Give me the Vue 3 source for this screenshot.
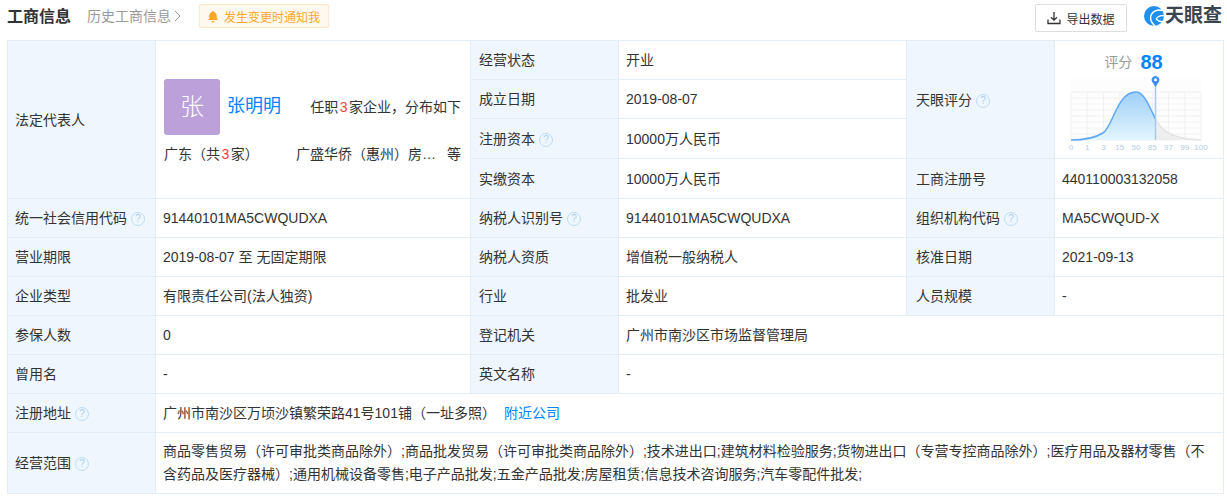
<script setup>
const axis = ['0', '1', '3', '15', '50', '85', '97', '99', '100']
const gridX = [0, 16.25, 32.5, 48.75, 65, 81.25, 97.5, 113.75, 130]
const gridY = [0, 6, 12, 18, 24, 30, 36, 42, 48]
const curveLeft = 'M0 48C14 48 24 46 32 41C42 34.5 46 0 65 0C73 0 78 14 84.5 27'
const curveRight = 'M84.5 27C90 37 98 47 130 48'
</script>

<template>
  <div class="page">
    <header class="bar">
      <h2 class="title">工商信息</h2>
      <a class="history">历史工商信息
        <svg width="7" height="12" viewBox="0 0 7 12"><path d="M1 1l5 5-5 5" fill="none" stroke="#999" stroke-width="1"/></svg>
      </a>
      <div class="notify">
        <svg width="12" height="13" viewBox="0 0 12 13"><path d="M6 1c.5 0 1 .4 1 .9C8.800 2.400 9.800 4 9.800 6v2.600L11 10H1l1.200-1.400V6C2.200 4 3.200 2.400 5 1.900 5 1.400 5.500 1 6 1zM4.500 11h3a1.500 1.500 0 0 1-3 0z" fill="#ffa726"/></svg>
        <span>发生变更时通知我</span>
      </div>
      <button class="export">
        <svg width="14" height="14" viewBox="0 0 14 14"><path d="M7 1v8M4 6.200 7 9.200l3-3M1 8.500V12.500H13V8.500" fill="none" stroke="#333" stroke-width="1.300"/></svg>
        <span>导出数据</span>
      </button>
      <div class="logo">
        <svg width="20" height="20" viewBox="0 0 20 20">
          <circle cx="10" cy="10" r="10" fill="#1f8ff0"/>
          <path d="M19.500 4.500C13 2.500 7.300 6 6.600 11c-.3 3.200 1.400 6.500 4.400 9" fill="none" stroke="#fff" stroke-width="1.500"/>
          <path d="M20 9.800c-3.500-.8-6.200.6-7.800 3.200 2 2.200 4.800 3 7.800 2.200" fill="none" stroke="#fff" stroke-width="1.200"/>
        </svg>
        <span>天眼查</span>
      </div>
    </header>

    <table class="info">
      <colgroup>
        <col class="c1" /><col class="c2" /><col class="c3" /><col class="c4" /><col class="c5" /><col class="c6" />
      </colgroup>
      <tbody>
        <tr>
          <th rowspan="4" class="first">法定代表人</th>
          <td rowspan="4" class="legal">
            <div class="person">
              <div class="avatar">张</div>
              <a class="name">张明明</a>
              <span class="office">任职<em>3</em>家企业，分布如下</span>
            </div>
            <div class="region">
              <span>广东（共<em>3</em>家）</span>
              <span class="firm"><span>广盛华侨（惠州）房…</span><span>等</span></span>
            </div>
          </td>
          <th>经营状态</th>
          <td>开业</td>
          <th rowspan="3" class="fifth">天眼评分<i class="help">?</i></th>
          <td rowspan="3" class="score">
            <div class="score-head"><span>评分</span><strong>88</strong></div>
            <svg class="chart" width="146" height="76" viewBox="-5 -16 146 76">
              <defs>
                <linearGradient id="fill" x1="0" y1="0" x2="0" y2="1">
                  <stop offset="0" stop-color="#9fcff8" />
                  <stop offset="1" stop-color="#e2f6fd" />
                </linearGradient>
              </defs>
              <rect x="0" y="-14" width="130" height="62" fill="#fdfdfd" />
              <path v-for="x in gridX" :key="'x' + x" :d="`M${x} 0V48`" stroke="#f1f1f3" fill="none" />
              <path v-for="y in gridY" :key="'y' + y" :d="`M0 ${y}H130`" stroke="#f1f1f3" fill="none" />
              <path :d="curveRight + 'H84.5Z'" fill="#eeeeee" />
              <path :d="curveLeft + 'V48H0Z'" fill="url(#fill)" />
              <path :d="curveRight" fill="none" stroke="#e4e4e6" stroke-width="1.5" />
              <path :d="curveLeft" fill="none" stroke="#5da6f6" stroke-width="1.5" />
              <path d="M84.5 -8V48" stroke="#a5c8f8" stroke-width="1.5" />
              <path d="M84.5 -5l-3.200-5a3.800 3.800 0 1 1 6.400 0z" fill="#3f8cf5" />
              <circle cx="84.5" cy="-12.200" r="1.500" fill="#ffffff" />
              <text v-for="(t, i) in axis" :key="t" :x="gridX[i]" y="57.500" class="tick">{{ t }}</text>
            </svg>
          </td>
        </tr>
        <tr><th>成立日期</th><td>2019-08-07</td></tr>
        <tr class="mid"><th>注册资本<i class="help">?</i></th><td>10000万人民币</td></tr>
        <tr class="mid"><th>实缴资本</th><td>10000万人民币</td><th class="fifth">工商注册号</th><td>440110003132058</td></tr>
        <tr>
          <th class="first">统一社会信用代码<i class="help">?</i></th><td>91440101MA5CWQUDXA</td>
          <th>纳税人识别号<i class="help">?</i></th><td>91440101MA5CWQUDXA</td>
          <th class="fifth">组织机构代码<i class="help">?</i></th><td>MA5CWQUD-X</td>
        </tr>
        <tr>
          <th class="first">营业期限</th><td>2019-08-07 至 无固定期限</td>
          <th>纳税人资质</th><td>增值税一般纳税人</td>
          <th class="fifth">核准日期</th><td>2021-09-13</td>
        </tr>
        <tr>
          <th class="first">企业类型</th><td>有限责任公司(法人独资)</td>
          <th>行业</th><td>批发业</td>
          <th class="fifth">人员规模</th><td>-</td>
        </tr>
        <tr>
          <th class="first">参保人数</th><td>0</td>
          <th>登记机关</th><td colspan="3">广州市南沙区市场监督管理局</td>
        </tr>
        <tr>
          <th class="first">曾用名</th><td>-</td>
          <th>英文名称</th><td colspan="3">-</td>
        </tr>
        <tr>
          <th class="first">注册地址<i class="help">?</i></th>
          <td colspan="5">广州市南沙区万顷沙镇繁荣路41号101铺（一址多照）<a class="near">附近公司</a></td>
        </tr>
        <tr class="tall">
          <th class="first">经营范围<i class="help">?</i></th>
          <td colspan="5">商品零售贸易（许可审批类商品除外）;商品批发贸易（许可审批类商品除外）;技术进出口;建筑材料检验服务;货物进出口（专营专控商品除外）;医疗用品及器材零售（不含药品及医疗器械）;通用机械设备零售;电子产品批发;五金产品批发;房屋租赁;信息技术咨询服务;汽车零配件批发;</td>
        </tr>
      </tbody>
    </table>
  </div>
</template>

<style>
html, body { background: #fff; }
</style>

<style scoped>
.page {
  width: 1227px;
  height: 499px;
  padding: 0 4px 0 7px;
  box-sizing: border-box;
  overflow: hidden;
  font-family: "Liberation Sans", "Noto Sans CJK SC", sans-serif;
  font-size: 14px;
  color: #333;
}
.bar { display: flex; align-items: flex-start; height: 40px; }
.title { margin: 6px 16px 0 0; font-size: 16px; line-height: 22px; font-weight: 700; color: #333; white-space: nowrap; }
.history { margin-top: 6px; line-height: 20px; color: #999; display: flex; align-items: center; gap: 3px; }
.notify {
  margin: 4px 0 0 18px; height: 24px; width: 130px; box-sizing: border-box;
  display: flex; align-items: center; gap: 5px; padding-left: 7px;
  background: #fff8ee; border: 1px solid #ffeacb; border-radius: 2px;
  color: #ffa726; font-size: 12px;
}
.export {
  margin: 4px 0 0 auto; width: 92px; height: 28px; box-sizing: border-box;
  display: flex; align-items: center; justify-content: center; gap: 5px; padding: 0;
  background: #fff; border: 1px solid #ddd; border-radius: 2px;
  font: inherit; font-size: 12px; color: #333;
}
.logo { margin: 6px 0 0 17px; display: flex; align-items: center; gap: 1px; height: 20px; width: 79px; white-space: nowrap; }
.logo svg { flex: none; }
.logo span { font-size: 19px; line-height: 20px; font-weight: 700; color: #3b4550; }

.info { width: 1216px; table-layout: fixed; border-collapse: collapse; border: 1px solid #e3edf5; }
.c1 { width: 148px; } .c2 { width: 315px; } .c3 { width: 148px; }
.c4 { width: 288px; } .c5 { width: 148px; } .c6 { width: 169px; }
tr { height: 39px; }
tr.mid { height: 40px; }
tr.tall { height: 61px; }
th, td { border: 1px solid #e3edf5; padding: 0 8px 0 7px; line-height: 22px; text-align: left; font-weight: 400; color: #333; box-sizing: border-box; }
th { background: #eff6fd; padding: 0 0 0 8px; white-space: nowrap; }
th.first { padding-left: 7px; }
th.fifth { padding-left: 9px; }
tr.tall td { line-height: 23px; }
.help {
  display: inline-block; width: 14px; height: 14px; margin-left: 4px; box-sizing: border-box;
  border: 1px solid #bcdcf5; border-radius: 50%; color: #a9d0ef;
  font-size: 10px; line-height: 12px; text-align: center; font-style: normal; vertical-align: 1px;
}
.legal { padding: 4px 9px 0 8px; }
.person { display: flex; align-items: center; }
.avatar {
  width: 56px; height: 56px; border-radius: 3px; background: #bba0da; color: #fff;
  font-size: 24px; font-weight: 300; line-height: 56px; text-align: center; flex: none;
}
.name { margin: -2px 0 0 7px; font-size: 18px; color: #0084ff; line-height: 24px; }
.office { margin-left: auto; }
.office em, .region em { font-style: normal; color: #ff3b3b; margin: 0 1.5px; }
.region { display: flex; justify-content: space-between; margin-top: 8px; }
.firm { display: flex; width: 165px; justify-content: space-between; }
.score { padding: 0; text-align: center; vertical-align: top; }
.score-head { display: flex; justify-content: center; align-items: center; gap: 8px; height: 35px; padding: 10px 11px 3px 0; box-sizing: border-box; color: #999; line-height: 22px; }
.score-head strong { color: #0084ff; font-size: 20px; font-weight: 700; line-height: 22px; }
.chart { display: block; margin: 0 auto; }
.tick { font-size: 8px; fill: #b3cdec; text-anchor: middle; font-family: "Liberation Sans", sans-serif; }
.near { margin-left: 8px; color: #0084ff; }
</style>
